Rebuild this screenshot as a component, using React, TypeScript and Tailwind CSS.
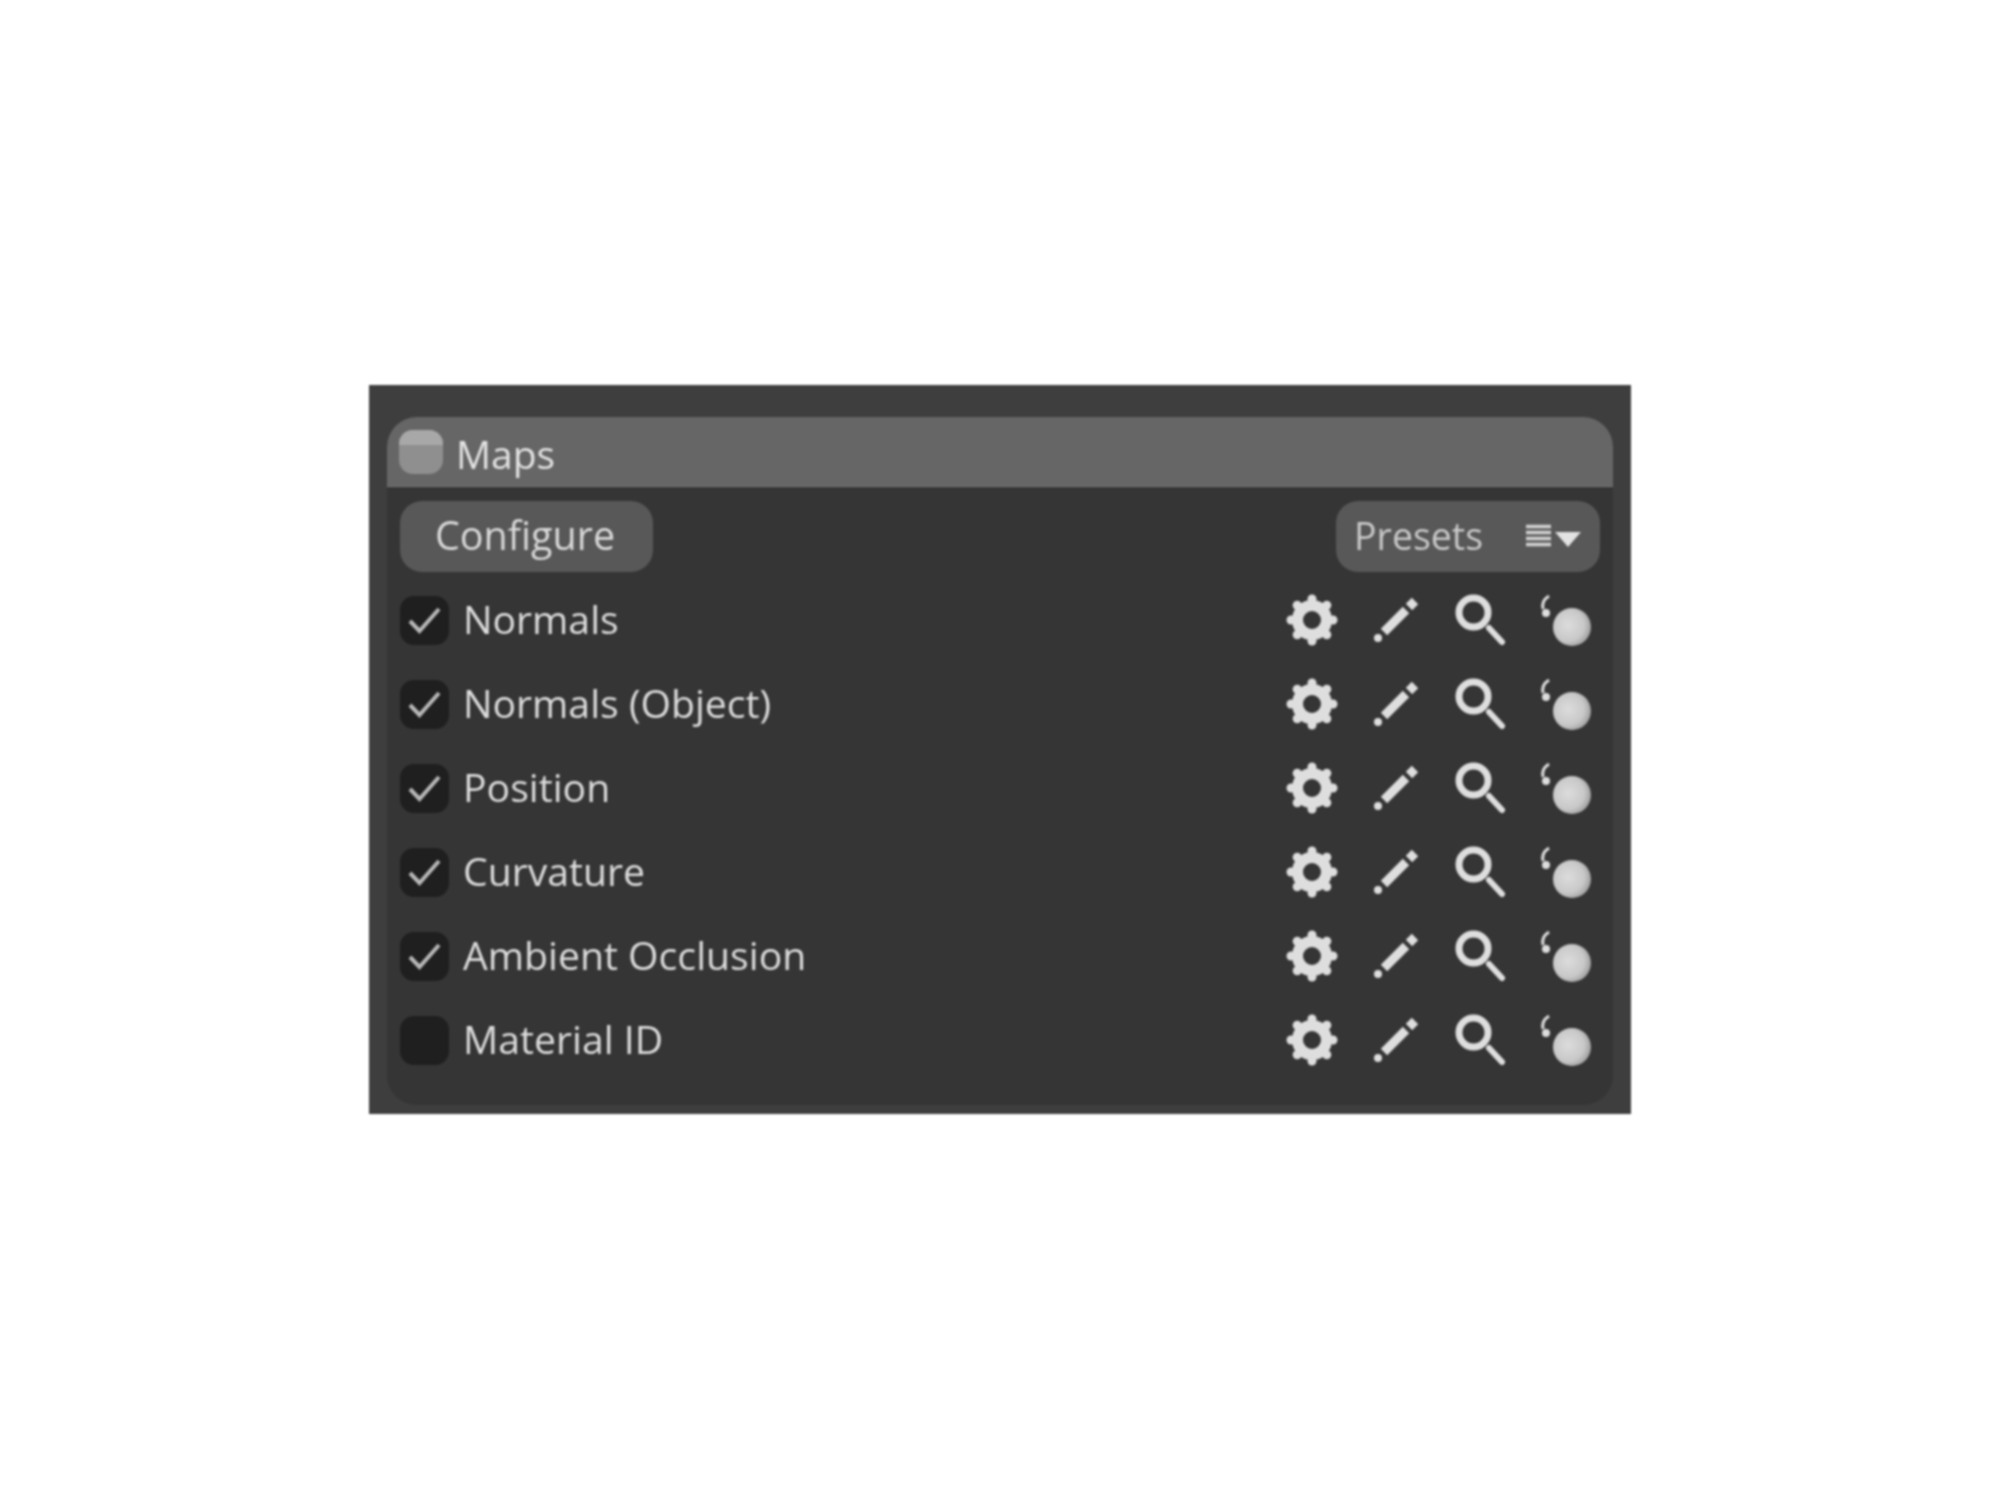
const maps = [
  { text: 'Normals', on: true },
  { text: 'Normals (Object)', on: true },
  { text: 'Position', on: true },
  { text: 'Curvature', on: true },
  { text: 'Ambient Occlusion', on: true },
  { text: 'Material ID', on: false },
]

function GearIcon() {
  const teeth = [[26, 5], [26, 47], [5, 26], [47, 26], [11.2, 11.2], [40.8, 11.2], [11.2, 40.8], [40.8, 40.8]]
  return (
    <svg viewBox="0 0 52 52" className="w-[52px] h-[52px]">
      <circle cx="26" cy="26" r="14.5" fill="none" stroke="#dedede" strokeWidth="11" />
      {teeth.map(([x, y]) => (
        <circle key={`${x}-${y}`} cx={x} cy={y} r="4.5" fill="#dedede" />
      ))}
    </svg>
  )
}

function PencilIcon() {
  return (
    <svg viewBox="0 0 46 46" className="w-[46px] h-[46px]">
      <path d="M11 35 L33 13" stroke="#dedede" strokeWidth="9" />
      <path d="M36 10 L42 4" stroke="#dedede" strokeWidth="9" />
      <circle cx="5" cy="41" r="4" fill="#dedede" />
    </svg>
  )
}

function SearchIcon() {
  return (
    <svg viewBox="0 0 52 52" className="w-[52px] h-[52px]">
      <circle cx="18.5" cy="18.5" r="14.5" fill="none" stroke="#dedede" strokeWidth="7" />
      <path d="M34 34 L47 48" stroke="#dedede" strokeWidth="6" strokeLinecap="round" />
    </svg>
  )
}

function BallIcon({ id }: { id: number }) {
  return (
    <svg viewBox="0 0 54 52" className="w-[54px] h-[52px]">
      <defs>
        <radialGradient id={`ball-${id}`} cx="0.4" cy="0.45" r="0.6">
          <stop offset="0%" stopColor="#dcdcdc" />
          <stop offset="70%" stopColor="#c8c8c8" />
          <stop offset="100%" stopColor="#a0a0a0" />
        </radialGradient>
      </defs>
      <path d="M11 2 Q3 7 5 15" fill="none" stroke="#dedede" strokeWidth="3" />
      <circle cx="8" cy="19" r="4" fill="#dedede" />
      <circle cx="34" cy="33" r="19" fill={`url(#ball-${id})`} />
    </svg>
  )
}

export default function App() {
  return (
    <div className="w-[2000px] h-[1500px] bg-white pt-[385px] font-['Open_Sans','Noto_Sans',sans-serif]">
      <div className="w-[1262px] h-[729px] mx-auto bg-[#3e3e3e] pt-[32px] px-[18px] blur-[1px]">
        <div className="h-[688px] bg-[#353535] rounded-[30px] overflow-hidden">
          {/* Header */}
          <div className="h-[70px] bg-[#666666] border-b border-[#777777] flex items-center pl-[12px] gap-[13px]">
            <div className="w-[44px] h-[44px] rounded-[14px] overflow-hidden bg-[#8f8f8f]">
              <div className="h-[15px] bg-[#a8a8a8]" />
            </div>
            <span className="text-[39px] leading-none text-[#e2e2e2] mt-[3px]">Maps</span>
          </div>

          {/* Toolbar */}
          <div className="flex items-center justify-between pl-[13px] pr-[13px] pt-[14px]">
            <button className="w-[253px] h-[71px] rounded-[22px] bg-[#585858] text-[39.5px] leading-none text-[#d8d8d8] pb-[2px] pr-[3px]">
              Configure
            </button>
            <div className="w-[264px] h-[71px] rounded-[22px] bg-[#585858] flex items-center pl-[18px] pr-[19px] justify-between">
              <span className="text-[37.5px] leading-none text-[#c8c8c8] pb-[2px]">Presets</span>
              <svg viewBox="0 0 56 26" className="w-[56px] h-[26px]">
                <path d="M1 2.5H26M1 8.5H26M1 14.5H26M1 20.5H26" stroke="#d2d2d2" strokeWidth="3.5" />
                <path d="M30 8H56L43 23Z" fill="#e2e2e2" />
              </svg>
            </div>
          </div>

          {/* Map rows */}
          <div className="flex flex-col pl-[13px] pr-[21px] pt-[6px]">
            {maps.map((m, i) => (
              <div key={m.text} className="h-[84px] flex items-center">
                <div className="w-[49px] h-[49px] rounded-[14px] bg-[#1f1f1f] grid place-items-center">
                  {m.on && (
                    <svg viewBox="0 0 35 28" className="w-[35px] h-[28px]">
                      <path d="M3 15 L12.5 25 L32 3" fill="none" stroke="#b8b8b8" strokeWidth="4" />
                    </svg>
                  )}
                </div>
                <span className="ml-[14px] text-[39.2px] leading-none text-[#dcdcdc] pb-[3px]">{m.text}</span>
                <div className="ml-auto flex items-center">
                  <GearIcon />
                  <div className="ml-[35px]"><PencilIcon /></div>
                  <div className="ml-[36px]"><SearchIcon /></div>
                  <div className="ml-[31px]"><BallIcon id={i} /></div>
                </div>
              </div>
            ))}
          </div>
        </div>
      </div>
    </div>
  )
}
